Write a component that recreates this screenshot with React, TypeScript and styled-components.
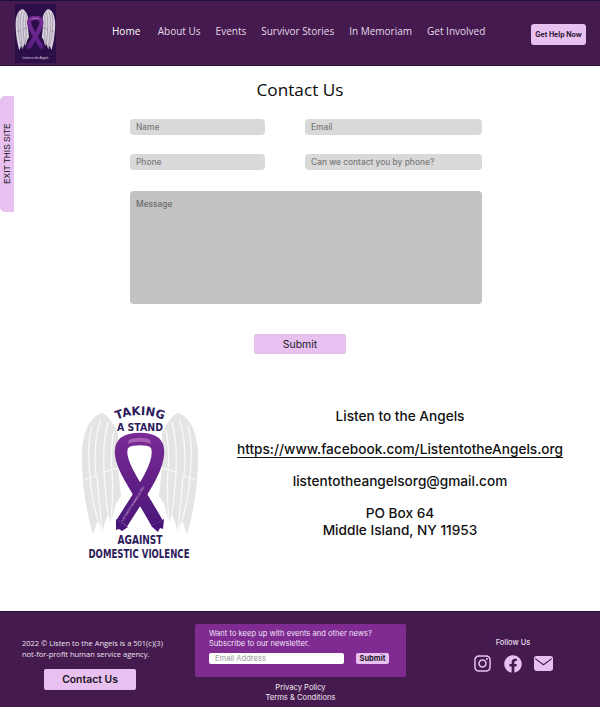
import styled, { createGlobalStyle } from "styled-components";
import { FaFacebook, FaInstagram } from "react-icons/fa";

const NAV_ITEMS = ["Home", "About Us", "Events", "Survivor Stories", "In Memoriam", "Get Involved"];

const WING_OUTLINE =
  "M23 9C12 11 4 24 2 46C1 70 5 105 13 130L18 116L22 127L28 110L31 118L36 100L41 92L38 62L38 30C34 20 29 13 23 9Z";
const WING_FEATHERS =
  "M21 14C15 32 14 52 16 72M28 18C24 34 23 50 24 68M34 26C31 40 31 54 32 68M12 22C8 36 8 54 10 72M10 72C11 88 14 104 18 116M17 72C18 88 20 106 22 127M24 68C25 84 26 98 28 110M32 68C33 80 33 92 31 118M38 64L24 68M16 72L5 76";

const GlobalStyle = createGlobalStyle`
  html, body {
    margin: 0;
    padding: 0;
    background: #fff;
  }
  * {
    box-sizing: border-box;
  }
`;

const Page = styled.div`
  position: relative;
  width: 600px;
  height: 707px;
  overflow: hidden;
  display: flex;
  flex-direction: column;
  font-family: "Inter", "Liberation Sans", sans-serif;
`;

const Header = styled.header`
  height: 66px;
  flex: none;
  display: flex;
  align-items: center;
  padding: 0 14px 0 15px;
  background: #451a4e;
  border-top: 1px solid #20123f;
  border-bottom: 1px solid #26113a;
`;

const LogoBox = styled.div`
  width: 41px;
  height: 59px;
  flex: none;
  background: #2c0f48;
`;

const Nav = styled.nav`
  display: flex;
  gap: 15px;
  margin: -4px 0 0 56px;
  flex: 1;
`;

const NavLink = styled.a<{ $active?: boolean }>`
  font-family: "Open Sans", sans-serif;
  font-size: 10px;
  line-height: 16px;
  color: ${(p) => (p.$active ? "#ffffff" : "#e6d9e8")};
  &:first-child {
    margin-right: 2.5px;
  }
`;

const HelpButton = styled.button`
  width: 55px;
  height: 21px;
  border: 0;
  padding: 0;
  border-radius: 3px;
  margin-top: 2px;
  background: #e8c1f0;
  color: #2b1430;
  font-family: "Inter", sans-serif;
  font-size: 7px;
  font-weight: 700;
`;

const ExitTab = styled.div`
  position: absolute;
  left: 0;
  top: 96px;
  width: 14px;
  height: 116px;
  display: flex;
  align-items: center;
  justify-content: center;
  border-radius: 0 5px 5px 0;
  background: #e8c1f0;
  color: #111;
  font-family: "Liberation Sans", sans-serif;
  font-size: 8.4px;
  writing-mode: vertical-rl;
  transform: rotate(180deg);
`;

const Main = styled.main`
  flex: 1;
  display: flex;
  flex-direction: column;
  align-items: center;
`;

const Title = styled.h1`
  margin: 11px 0 0;
  font-family: "Open Sans", sans-serif;
  font-size: 17.2px;
  line-height: 25px;
  font-weight: 400;
  color: #0b0b0b;
`;

const Form = styled.form`
  width: 352px;
  margin: 17px 0 0 12px;
  display: grid;
  grid-template-columns: 135px 177px;
  column-gap: 40px;
  row-gap: 19px;
`;

const Field = styled.div`
  height: 16px;
  display: flex;
  align-items: center;
  padding-left: 6px;
  border-radius: 4px;
  background: #d9d9d9;
  color: #7a7a7a;
  font-size: 8.4px;
  font-weight: 500;
`;

const MessageField = styled(Field)`
  grid-column: 1 / -1;
  height: 113px;
  margin-top: 2px;
  align-items: flex-start;
  padding-top: 8px;
  background: #c2c2c2;
  color: #6c6c6c;
`;

const SubmitButton = styled.button`
  width: 92px;
  height: 20px;
  margin: 30px 0 0;
  border: 0;
  padding: 0;
  border-radius: 2px;
  background: #e8c1f0;
  color: #241a28;
  font-family: "Inter", sans-serif;
  font-size: 10.5px;
`;

const Info = styled.section`
  width: 100%;
  margin-top: 48px;
  padding-left: 80px;
  display: flex;
  align-items: flex-start;
`;

const RibbonLogo = styled.svg`
  width: 120px;
  height: 156px;
  flex: none;
  margin-top: 2px;
`;

const Contact = styled.div`
  margin: 6px 0 0 37px;
  width: 326px;
  display: flex;
  flex-direction: column;
  align-items: center;
  color: #111;
  font-size: 13.65px;
  font-weight: 500;
  line-height: 17px;
`;

const ContactLine = styled.div<{ $gap?: number }>`
  margin-top: ${(p) => p.$gap ?? 0}px;
  white-space: nowrap;
`;

const ContactLink = styled.a`
  margin-top: 16px;
  border-bottom: 1px solid #111;
  line-height: 16px;
  white-space: nowrap;
`;

const Footer = styled.footer`
  height: 96px;
  flex: none;
  display: flex;
  background: #451a4e;
  border-top: 1px solid #20123f;
  color: #eee3f0;
`;

const FooterLeftColumn = styled.div`
  width: 195px;
  flex: none;
`;

const FooterNote = styled.div`
  padding: 26px 0 0 22px;
  font-family: "Open Sans", sans-serif;
  font-size: 7.5px;
  line-height: 11px;
  white-space: nowrap;
`;

const FooterButton = styled.button`
  display: block;
  width: 92px;
  height: 21px;
  margin: 9px 0 0 44px;
  padding: 0;
  border: 0;
  border-radius: 2px;
  background: #e8c1f0;
  color: #1d1320;
  font-family: "Inter", sans-serif;
  font-size: 10.4px;
  font-weight: 600;
`;

const FooterCenter = styled.div`
  width: 211px;
  flex: none;
  padding-top: 12px;
  display: flex;
  flex-direction: column;
  align-items: center;
`;

const Newsletter = styled.div`
  width: 211px;
  height: 53px;
  padding: 5px 0 0 14px;
  border-radius: 2px;
  background: #7f2b92;
  font-size: 7.6px;
  line-height: 10px;
  color: #f0e2f4;
`;

const SubscribeRow = styled.div`
  display: flex;
  align-items: center;
  margin-top: 3px;
`;

const EmailInput = styled.div`
  width: 135px;
  height: 11px;
  padding-left: 6px;
  border-radius: 2px;
  background: #fff;
  color: #9a9a9a;
  font-size: 7.6px;
  line-height: 11px;
`;

const SmallSubmit = styled.button`
  width: 33px;
  height: 11px;
  margin: 1px 0 0 12px;
  padding: 0;
  border: 0;
  border-radius: 2px;
  background: #e8c1f0;
  color: #241528;
  font-family: "Inter", sans-serif;
  font-size: 7.5px;
  font-weight: 700;
  line-height: 11px;
`;

const LegalLinks = styled.div`
  margin-top: 6px;
  text-align: center;
  font-size: 7.6px;
  line-height: 10px;
  color: #f2e9f3;
`;

const FooterRight = styled.div`
  flex: 1;
  padding: 26px 0 0 20px;
  display: flex;
  flex-direction: column;
  align-items: center;
`;

const FollowLabel = styled.div`
  font-size: 7.5px;
  font-weight: 500;
  line-height: 10px;
  color: #e6d9e8;
`;

const Socials = styled.div`
  margin-top: 6px;
  display: flex;
  align-items: center;
  gap: 12px;
  color: #e8c1f0;
`;

const MailIcon = () => (
  <svg width="19" height="15" viewBox="0 0 19 15" aria-hidden="true">
    <rect width="19" height="15" rx="2.4" fill="#e8c1f0" />
    <path d="M1.2 2.6 9.5 8.8l8.3-6.2" fill="none" stroke="#451a4e" strokeWidth="1.1" />
  </svg>
);

const Wing = ({ flip, fill, line }: { flip?: boolean; fill: string; line: string }) => (
  <g transform={flip ? "translate(120 0) scale(-1 1)" : undefined}>
    <path d={WING_OUTLINE} fill={fill} />
    <path d={WING_FEATHERS} fill="none" stroke={line} strokeWidth="1.3" />
  </g>
);

const Ribbon = ({ id, from, to }: { id: string; from: string; to: string }) => (
  <g>
    <defs>
      <linearGradient id={id} gradientUnits="userSpaceOnUse" x1="0" y1="30" x2="0" y2="126">
        <stop offset="0" stopColor={from} />
        <stop offset="1" stopColor={to} />
      </linearGradient>
    </defs>
    {/* strand going down to the right tail, behind the other one */}
    <path d="M60 35C48 35 41 38 41 48C41 64 60 88 77 119" fill="none" stroke={`url(#${id})`} strokeWidth="12.5" />
    <path d="M71 122l13-7 -1 10-3-1-2 4z" fill={to} />
    {/* strand going down to the left tail, on top */}
    <path d="M60 35C72 35 78 38 78 48C78 66 60 90 42 119" fill="none" stroke={`url(#${id})`} strokeWidth="12.5" />
    <path d="M36 115l12 8-6 4-3-2-3 1z" fill={to} />
    <path d="M49 36c6-3 16-3 21 0l1 4c-6-3-17-3-23 0z" fill="#a75fb8" />
  </g>
);

const TakingStandLogo = () => {
  const title = { fontFamily: "DejaVu Sans, sans-serif", fontWeight: 700, fill: "#2d1a5a" };
  return (
    <RibbonLogo viewBox="0 0 120 156" role="img" aria-label="Taking a Stand Against Domestic Violence">
      <defs>
        <path id="takingArc" d="M34 17Q60 5 86 17" fill="none" />
        <path id="bandText" d="M42 117C58 92 73 70 76.5 50" fill="none" />
      </defs>
      <Wing fill="#e4e4e4" line="#f8f8f8" />
      <Wing flip fill="#e4e4e4" line="#f8f8f8" />
      <Ribbon id="ribbonFill" from="#7a2b94" to="#4a1578" />
      <text fontSize="3" fill="#e9d6ef" fontFamily="Liberation Sans, sans-serif" dy="1">
        <textPath href="#bandText">LISTENTOTHEANGELS.ORG</textPath>
      </text>
      <text {...title} fontSize="12">
        <textPath href="#takingArc" startOffset="50%" textAnchor="middle" textLength="48" lengthAdjust="spacingAndGlyphs">
          TAKING
        </textPath>
      </text>
      <text {...title} x="60" y="27" fontSize="11" textAnchor="middle" textLength="46" lengthAdjust="spacingAndGlyphs">
        A STAND
      </text>
      <text {...title} x="60" y="140" fontSize="12" textAnchor="middle" textLength="45" lengthAdjust="spacingAndGlyphs">
        AGAINST
      </text>
      <text {...title} x="59" y="154" fontSize="12" textAnchor="middle" textLength="101" lengthAdjust="spacingAndGlyphs">
        DOMESTIC VIOLENCE
      </text>
    </RibbonLogo>
  );
};

const HeaderLogo = () => (
  <LogoBox>
    <svg width="41" height="59" viewBox="0 0 41 59" aria-hidden="true">
      <g transform="translate(0 2) scale(0.34)">
        <Wing fill="#d8d2dc" line="#6f6080" />
        <Wing flip fill="#d8d2dc" line="#6f6080" />
        <Ribbon id="headerRibbon" from="#7a2c96" to="#5a1f86" />
      </g>
      <text x="20.5" y="55" textAnchor="middle" fontFamily="Liberation Sans, sans-serif" fontSize="3" fontStyle="italic" fill="#e6dcea">
        Listen to the Angels
      </text>
    </svg>
  </LogoBox>
);

const App = () => {
  return (
    <Page>
      <GlobalStyle />
      <Header>
        <HeaderLogo />
        <Nav>
          {NAV_ITEMS.map((item, i) => (
            <NavLink key={item} $active={i === 0}>
              {item}
            </NavLink>
          ))}
        </Nav>
        <HelpButton>Get Help Now</HelpButton>
      </Header>
      <ExitTab>EXIT THIS SITE</ExitTab>
      <Main>
        <Title>Contact Us</Title>
        <Form>
          <Field>Name</Field>
          <Field>Email</Field>
          <Field>Phone</Field>
          <Field>Can we contact you by phone?</Field>
          <MessageField>Message</MessageField>
        </Form>
        <SubmitButton type="button">Submit</SubmitButton>
        <Info>
          <TakingStandLogo />
          <Contact>
            <ContactLine $gap={0}>Listen to the Angels</ContactLine>
            <ContactLink>https://www.facebook.com/ListentotheAngels.org</ContactLink>
            <ContactLine $gap={15}>listentotheangelsorg@gmail.com</ContactLine>
            <ContactLine $gap={15}>PO Box 64</ContactLine>
            <ContactLine>Middle Island, NY 11953</ContactLine>
          </Contact>
        </Info>
      </Main>
      <Footer>
        <FooterLeftColumn>
          <FooterNote>
            2022 © Listen to the Angels is a 501(c)(3)
            <br />
            not-for-profit human service agency.
          </FooterNote>
          <FooterButton>Contact Us</FooterButton>
        </FooterLeftColumn>
        <FooterCenter>
          <Newsletter>
            Want to keep up with events and other news?
            <br />
            Subscribe to our newsletter.
            <SubscribeRow>
              <EmailInput>Email Address</EmailInput>
              <SmallSubmit>Submit</SmallSubmit>
            </SubscribeRow>
          </Newsletter>
          <LegalLinks>
            Privacy Policy
            <br />
            Terms &amp; Conditions
          </LegalLinks>
        </FooterCenter>
        <FooterRight>
          <FollowLabel>Follow Us</FollowLabel>
          <Socials>
            <FaInstagram size={19} />
            <FaFacebook size={18} />
            <MailIcon />
          </Socials>
        </FooterRight>
      </Footer>
    </Page>
  );
};

export default App;
